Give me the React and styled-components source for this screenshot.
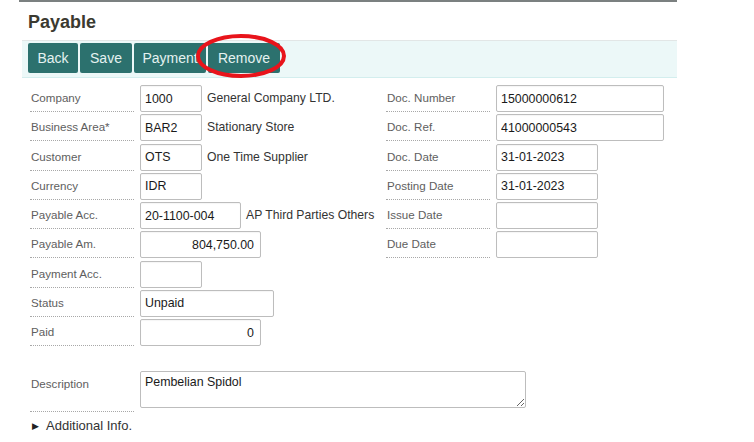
import React from "react";
import styled, { createGlobalStyle } from "styled-components";

const Global = createGlobalStyle`
  html, body { margin: 0; padding: 0; background: #fff; }
  body { font-family: "Liberation Sans", Arial, sans-serif; }
  * { box-sizing: border-box; }
`;

const Page = styled.div`
  margin-left: 19px;
  width: 658px;
  border-top: 2px solid #7b8080;
`;

const Title = styled.h1`
  margin: 0;
  padding: 9px 0 0 9px;
  height: 38px;
  font-size: 18px;
  font-weight: bold;
  color: #3b3a30;
  line-height: 22px;
`;

const Toolbar = styled.div`
  position: relative;
  margin-left: 3px;
  height: 38px;
  background: #ecf8f8;
  border-top: 1px solid #e2e6e6;
  border-bottom: 1px solid #d3eeee;
  display: flex;
  gap: 2px;
  padding: 2px 0 0 6px;
`;

const Button = styled.button`
  height: 30px;
  width: ${(p) => p.$w}px;
  border: none;
  border-radius: 2px;
  background: #2c716e;
  color: #e4f2f1;
  font-family: "Liberation Sans", Arial, sans-serif;
  font-size: 14px;
  padding: 0;
  cursor: pointer;
`;

const Highlight = styled.svg`
  position: absolute;
  left: 171px;
  top: -8px;
  overflow: visible;
`;

const Form = styled.div`
  display: grid;
  grid-template-columns: 356px 1fr;
  padding: 7px 0 0 11px;
`;

const Column = styled.div`
  display: flex;
  flex-direction: column;
  gap: 2.25px;
`;

const Row = styled.div`
  display: flex;
  align-items: flex-start;
  height: 27px;
`;

const Label = styled.div`
  width: 104px;
  height: 100%;
  flex: none;
  border-bottom: 1px dotted #a8a8a8;
  color: #5e5e5e;
  font-size: 11.6px;
  line-height: 14px;
  padding: 6px 0 0 1px;
  margin-right: 6px;
`;

const Field = styled.input`
  width: ${(p) => p.$w}px;
  height: 27px;
  border: 1px solid #bdbdbd;
  border-radius: 2px;
  padding: 0 ${(p) => (p.$right ? 6 : 4)}px 0 4px;
  font-family: "Liberation Sans", Arial, sans-serif;
  font-size: 12.4px;
  color: #1a1a1a;
  text-align: ${(p) => (p.$right ? "right" : "left")};
  background: #fff;
  outline: none;
  box-shadow: inset 0 1px 1px rgba(0, 0, 0, 0.04);
`;

const Area = styled.textarea`
  width: 386px;
  height: 37px;
  border: 1px solid #bdbdbd;
  border-radius: 2px;
  padding: 3px 4px;
  font-family: "Liberation Sans", Arial, sans-serif;
  font-size: 12.4px;
  color: #1a1a1a;
  outline: none;
  resize: both;
  line-height: 14px;
`;

const Aside = styled.span`
  font-size: 12.2px;
  color: #333;
  line-height: 27px;
  margin-left: 5px;
  white-space: nowrap;
`;

const DescRow = styled.div`
  display: flex;
  align-items: flex-start;
  height: 41px;
  margin: 25px 0 0 11px;
`;

const More = styled.div`
  display: flex;
  align-items: center;
  gap: 7px;
  margin: 6px 0 0 13px;
  font-size: 13px;
  color: #333;
`;

const Caret = styled.span`
  font-size: 9px;
  color: #222;
`;

const left = [
  { label: "Company", value: "1000", w: 62, aside: "General Company LTD." },
  { label: "Business Area*", value: "BAR2", w: 62, aside: "Stationary Store" },
  { label: "Customer", value: "OTS", w: 62, aside: "One Time Supplier" },
  { label: "Currency", value: "IDR", w: 62 },
  { label: "Payable Acc.", value: "20-1100-004", w: 101, aside: "AP Third Parties Others" },
  { label: "Payable Am.", value: "804,750.00", w: 121, right: true },
  { label: "Payment Acc.", value: "", w: 62 },
  { label: "Status", value: "Unpaid", w: 134 },
  { label: "Paid", value: "0", w: 121, right: true },
];

const rightCol = [
  { label: "Doc. Number", value: "15000000612", w: 168 },
  { label: "Doc. Ref.", value: "41000000543", w: 168 },
  { label: "Doc. Date", value: "31-01-2023", w: 102 },
  { label: "Posting Date", value: "31-01-2023", w: 102 },
  { label: "Issue Date", value: "", w: 102 },
  { label: "Due Date", value: "", w: 102 },
];

function FormRow({ f }) {
  return (
    <Row>
      <Label>{f.label}</Label>
      <Field readOnly value={f.value} $w={f.w} $right={f.right} />
      {f.aside && <Aside>{f.aside}</Aside>}
    </Row>
  );
}

export default function App() {
  return (
    <>
      <Global />
      <Page>
        <Title>Payable</Title>
        <Toolbar>
          <Button $w={50}>Back</Button>
          <Button $w={52}>Save</Button>
          <Button $w={72}>Payment</Button>
          <Button $w={72}>Remove</Button>
          <Highlight width="92" height="44">
            <ellipse cx="48" cy="23" rx="43" ry="20" fill="none" stroke="#e8141b" strokeWidth="4" />
          </Highlight>
        </Toolbar>
        <Form>
          <Column>
            {left.map((f) => (
              <FormRow key={f.label} f={f} />
            ))}
          </Column>
          <Column>
            {rightCol.map((f) => (
              <FormRow key={f.label} f={f} />
            ))}
          </Column>
        </Form>
        <DescRow>
          <Label>Description</Label>
          <Area readOnly defaultValue="Pembelian Spidol" />
        </DescRow>
        <More>
          <Caret>▶</Caret>
          <span>Additional Info.</span>
        </More>
      </Page>
    </>
  );
}
